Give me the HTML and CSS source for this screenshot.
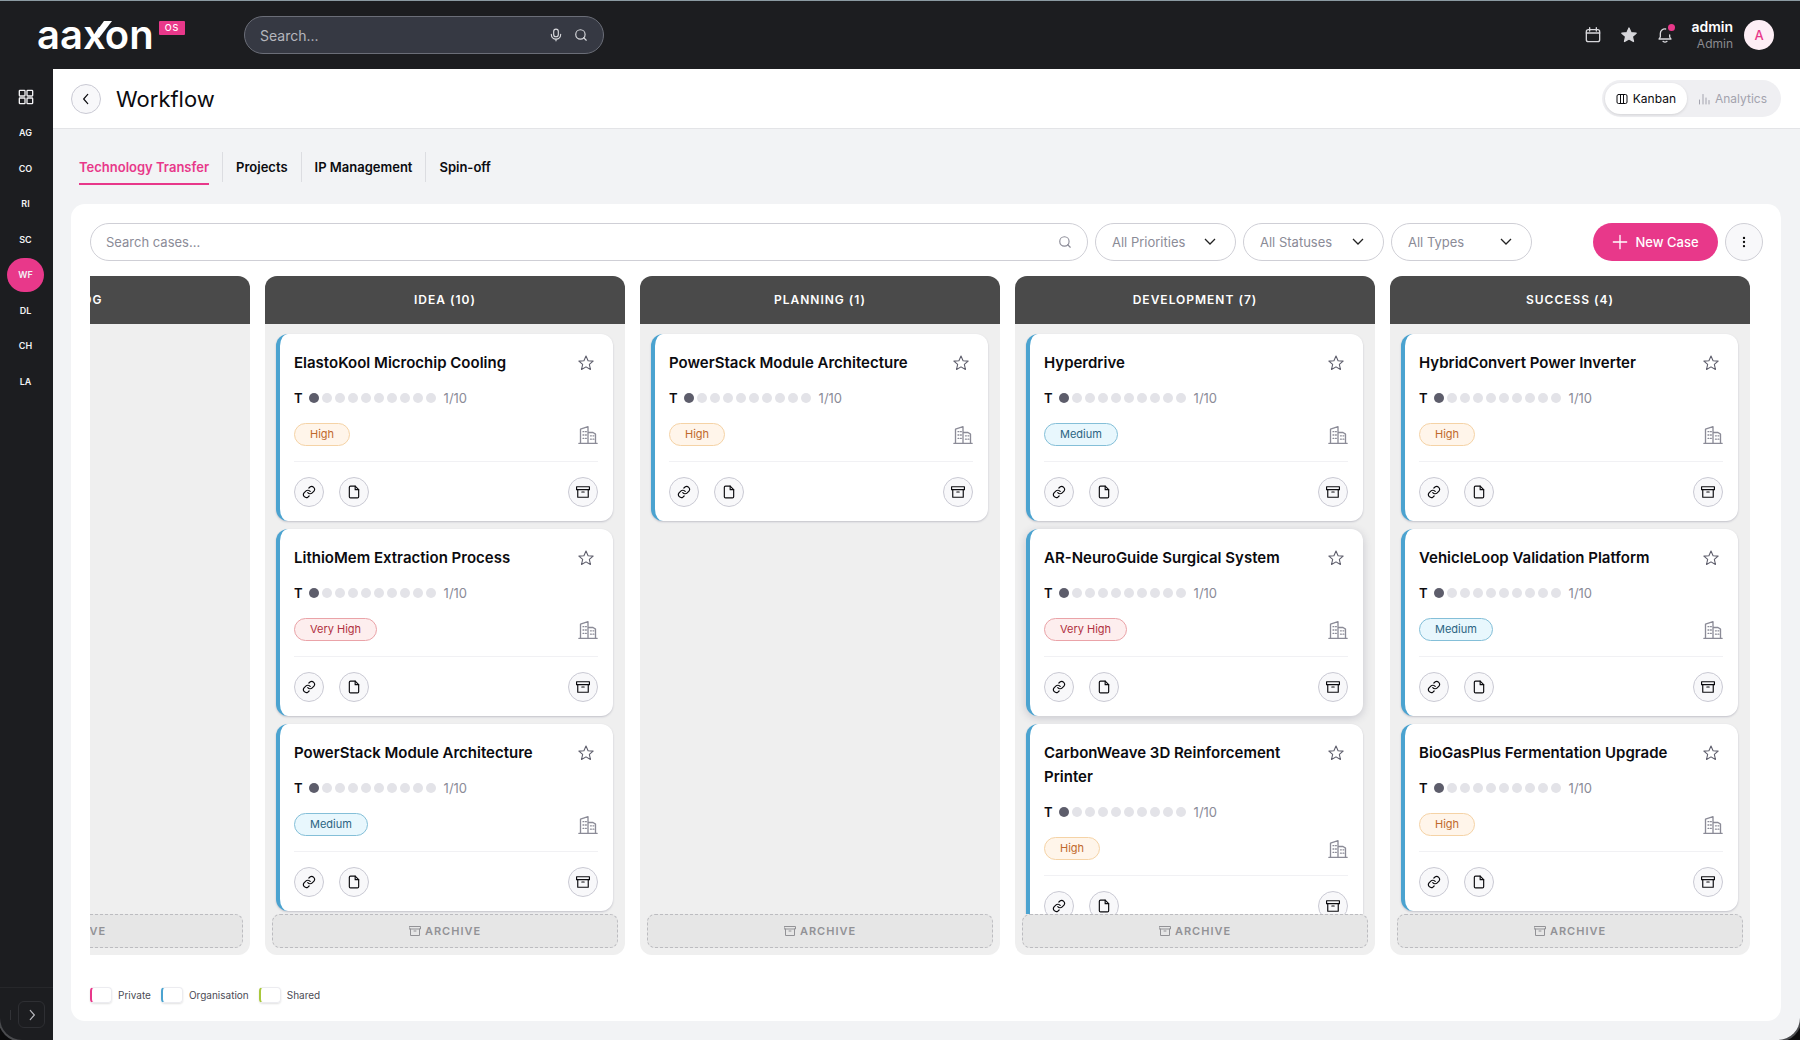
FILE: index.html
```html
<!DOCTYPE html>
<html lang="en">
<head>
<meta charset="utf-8">
<title>Workflow</title>
<link rel="stylesheet" href="styles.css">
</head>
<body>
<svg class="sprite" aria-hidden="true">
  <symbol id="i-search" viewBox="0 0 24 24"><circle cx="11" cy="11" r="8"/><path d="m21 21-4.3-4.3"/></symbol>
  <symbol id="i-mic" viewBox="0 0 24 24"><rect x="8" y="2" width="8" height="13" rx="4"/><path d="M4 11a8 8 0 0 0 16 0M12 19v3"/></symbol>
  <symbol id="i-cal" viewBox="0 0 24 24"><rect x="2" y="4" width="20" height="18" rx="3"/><path d="M2 9h20M7 1v5M17 1v5"/></symbol>
  <symbol id="i-star" viewBox="0 0 24 24"><path d="m12 1.500 3.100 7 7.600.7-5.700 5 1.700 7.500L12 17.800l-6.700 3.900 1.700-7.500-5.700-5 7.600-.7z"/></symbol>
  <symbol id="i-bell" viewBox="0 0 24 24"><path d="M13 3a7 7 0 0 0-8 7v5l-2 3h18l-2-3v-3M9 21.500c2 1.500 4 1.500 6 0"/></symbol>
  <symbol id="i-grid" viewBox="0 0 24 24"><rect x="2" y="2" width="8.500" height="8.500" rx="1"/><rect x="13.500" y="2" width="8.500" height="8.500" rx="1"/><rect x="2" y="13.500" width="8.500" height="8.500" rx="1"/><rect x="13.500" y="13.500" width="8.500" height="8.500" rx="1"/></symbol>
  <symbol id="i-left" viewBox="0 0 24 24"><path d="m15 4-7 8 7 8"/></symbol>
  <symbol id="i-right" viewBox="0 0 24 24"><path d="m9 4 7 8-7 8"/></symbol>
  <symbol id="i-board" viewBox="0 0 24 24"><rect x="2" y="3" width="20" height="18" rx="3"/><path d="M9 3v18M15 3v18"/></symbol>
  <symbol id="i-bars" viewBox="0 0 24 24"><path d="M3 14v8M10 3v19M16 10v12M22 15v7"/></symbol>
  <symbol id="i-plus" viewBox="0 0 24 24"><path d="M12 2v20M2 12h20"/></symbol>
  <symbol id="i-dots" viewBox="0 0 24 24"><circle cx="12" cy="5" r="1"/><circle cx="12" cy="12" r="1"/><circle cx="12" cy="19" r="1"/></symbol>
  <symbol id="i-link" viewBox="0 0 24 24"><path d="M10 13a5 5 0 0 0 7.500.5l3-3a5 5 0 0 0-7-7l-1.700 1.700"/><path d="M14 11a5 5 0 0 0-7.500-.5l-3 3a5 5 0 0 0 7 7l1.700-1.700"/></symbol>
  <symbol id="i-file" viewBox="0 0 24 24"><path d="M14 2H6a2 2 0 0 0-2 2v16a2 2 0 0 0 2 2h12a2 2 0 0 0 2-2V8z"/><path d="M14 2v6h6"/></symbol>
  <symbol id="i-box" viewBox="0 0 24 24"><rect x="1" y="3" width="22" height="5"/><path d="M3 8v13h18V8M10 12h4"/></symbol>
  <symbol id="i-org" viewBox="0 0 24 24"><path d="M1 22h22M3 22V5l9-3v20M12 9h6l3 2v11M6 8h1M6 12h1M6 16h1M9 8h1M9 12h1M9 16h1M15 13h1M15 17h1M18 13h1M18 17h1"/></symbol>
</svg>

<div class="app">
  <header class="topbar">
    <a class="logo" href="#">
      <span class="logo-word">aaxon<svg class="logo-slash" viewBox="0 0 19 17"><path d="M0 15 11 0h8L6 17z"/></svg></span>
      <span class="logo-tag">OS</span>
    </a>
    <label class="global-search">
      <input type="search" placeholder="Search..." aria-label="Search">
      <svg class="ic"><use href="#i-mic"/></svg>
      <svg class="ic"><use href="#i-search"/></svg>
    </label>
    <div class="top-actions">
      <div class="top-icons">
        <button aria-label="Calendar"><svg class="ic16"><use href="#i-cal"/></svg></button>
        <button class="solid" aria-label="Favourites"><svg class="ic16"><use href="#i-star"/></svg></button>
        <button class="bell" aria-label="Notifications"><svg class="ic16"><use href="#i-bell"/></svg></button>
      </div>
      <div class="user"><div class="user-text"><strong>admin</strong><span>Admin</span></div><span class="avatar">A</span></div>
    </div>
  </header>

  <div class="body">
    <aside class="sidebar">
      <nav class="side-nav">
        <a href="#" aria-label="Dashboard"><svg class="ic16"><use href="#i-grid"/></svg></a>
        <a href="#">AG</a><a href="#">CO</a><a href="#">RI</a><a href="#">SC</a>
        <a href="#" class="active">WF</a><a href="#">DL</a><a href="#">CH</a><a href="#">LA</a>
      </nav>
      <div class="side-foot"><button aria-label="Expand"><svg class="ic"><use href="#i-right"/></svg></button></div>
    </aside>

    <main class="main">
      <div class="page-head">
        <button class="round" aria-label="Back"><svg class="ic"><use href="#i-left"/></svg></button>
        <h1>Workflow</h1>
        <div class="toggle">
          <button class="on"><svg class="ic12"><use href="#i-board"/></svg>Kanban</button>
          <button><svg class="ic12"><use href="#i-bars"/></svg>Analytics</button>
        </div>
      </div>

      <nav class="tabs">
        <a href="#" class="active">Technology Transfer</a><a href="#">Projects</a><a href="#">IP Management</a><a href="#">Spin-off</a>
      </nav>

      <section class="panel">
        <div class="toolbar">
          <label class="case-search"><input type="search" placeholder="Search cases..." aria-label="Search cases"><svg class="ic"><use href="#i-search"/></svg></label>
          <select aria-label="Priority"><option>All Priorities</option></select>
          <select aria-label="Status"><option>All Statuses</option></select>
          <select aria-label="Type"><option>All Types</option></select>
          <button class="new-case"><svg class="ic16"><use href="#i-plus"/></svg>New Case</button>
          <button class="more" aria-label="More"><svg class="ic"><use href="#i-dots"/></svg></button>
        </div>
        <div class="board" id="board"></div>
        <div class="legend">
          <span><i class="swatch private"></i>Private</span>
          <span><i class="swatch organisation"></i>Organisation</span>
          <span><i class="swatch shared"></i>Shared</span>
        </div>
      </section>
    </main>
  </div>
</div>
<script src="board.js"></script>
</body>
</html>
```
FILE: styles.css
```css
* { box-sizing: border-box; }
body { margin: 0; background: #0b0b0c; font-family: Inter, "Noto Sans", sans-serif; color: #0b0b0f; font-size: 14px; }
button, input, select { font: inherit; color: inherit; margin: 0; }
button { cursor: pointer; padding: 0; border: 0; background: none; }
a { color: inherit; text-decoration: none; }
svg { fill: none; stroke: currentColor; stroke-width: 2; stroke-linecap: round; stroke-linejoin: round; flex: none; display: block; }
.sprite { display: none; }
.ic { width: 14px; height: 14px; }
.ic12 { width: 12px; height: 12px; }
.ic16 { width: 16px; height: 16px; }

.app { min-height: 100vh; display: flex; flex-direction: column; background: #1c1d20; border-top: 1px solid #8b9aa2; border-radius: 0 0 22px 22px; box-shadow: 0 0 0 2px #4a4b4e; overflow: hidden; }
.topbar { height: 68px; display: flex; align-items: center; padding: 0 26px 0 37px; color: #fff; }
.logo { width: 207px; display: flex; align-items: flex-start; gap: 5px; }
.logo-word { position: relative; font-size: 40px; line-height: 44px; font-weight: 600; }
.logo-slash { position: absolute; left: 56px; top: 8px; width: 19px; height: 17px; fill: currentColor; stroke: none; }
.logo-tag { margin-top: 8px; padding: 0 6px; border-radius: 1px; background: #e8388a; font-size: 9px; line-height: 14px; font-weight: 500; letter-spacing: 1px; }
.global-search { width: 360px; height: 38px; display: flex; align-items: center; gap: 11px; padding: 0 15px; border: 1px solid #6b6e78; border-radius: 19px; background: #363943; color: #d8d9dd; }
.global-search input, .case-search input { flex: 1; min-width: 0; border: 0; outline: 0; padding: 0; background: none; }
.global-search input::placeholder { color: #b5b6bd; }
.top-actions { margin-left: auto; display: flex; align-items: center; gap: 18px; color: #d6d6da; }
.top-icons { display: flex; gap: 20px; }
.solid svg { fill: currentColor; }
.bell { position: relative; }
.bell::after { content: ""; position: absolute; right: -2px; top: -3px; width: 7px; height: 7px; border-radius: 50%; background: #e8388a; }
.user { display: flex; align-items: center; gap: 11px; }
.user-text { display: flex; flex-direction: column; align-items: flex-end; }
.user-text strong { font-size: 14px; line-height: 18px; font-weight: 600; color: #fff; }
.user-text span { font-size: 12px; line-height: 16px; color: #8b8b90; }
.avatar { width: 30px; height: 30px; border-radius: 50%; background: #fdeef5; color: #e8388a; font-size: 13px; line-height: 30px; text-align: center; font-weight: 500; }

.body { flex: 1; display: flex; min-height: 0; }
.sidebar { width: 53px; flex: none; display: flex; flex-direction: column; color: #f2f2f4; }
.side-nav { height: 329px; padding: 11px 9px 0 7px; display: flex; flex-direction: column; justify-content: space-between; }
.side-nav a { height: 34px; display: flex; align-items: center; justify-content: center; border-radius: 17px; font-size: 9px; font-weight: 600; }
.side-nav .active { background: #e8388a; }
.side-foot { margin-top: auto; height: 53px; padding: 13px 8px 0 10px; border-top: 1px solid #26272a; display: flex; align-items: flex-start; justify-content: space-between; }
.side-foot::before { content: ""; width: 1px; height: 10px; margin-top: 9px; background: #323337; }
.side-foot button { width: 27px; height: 27px; border: 1px solid #2e2f33; border-radius: 6px; display: grid; place-items: center; color: #b9b9be; }

.main { flex: 1; min-width: 0; background: #f2f3f5; display: flex; flex-direction: column; }
.page-head { height: 60px; flex: none; display: flex; align-items: center; gap: 15px; padding: 0 19px 0 18px; background: #fff; border-bottom: 1px solid #e3e4e7; }
.round { width: 30px; height: 30px; flex: none; border: 1px solid #cacad4; border-radius: 50%; background: #f8f8fa; display: grid; place-items: center; }
h1 { margin: 0; font-size: 22px; line-height: 30px; font-weight: 400; }
.toggle { margin-left: auto; display: flex; padding: 3px; border-radius: 19px; background: #efeff2; }
.toggle button { height: 31px; padding: 0 11px; display: flex; align-items: center; gap: 5px; border-radius: 16px; font-size: 12px; color: #a3a3ae; }
.toggle .on { background: #fff; color: #0b0b0f; box-shadow: 0 1px 3px rgba(0, 0, 0, .12); }

.tabs { display: flex; padding: 23px 26px 0; margin-bottom: 19px; font-weight: 600; font-size: 13px; line-height: 30px; }
.tabs a + a { margin-left: 13px; padding-left: 13px; border-left: 1px solid #dcdde1; height: 30px; }
.tabs .active { padding-bottom: 1px; color: #e8388a; border-bottom: 2px solid #e8388a; }

.panel { flex: 1; margin: 0 19px 19px 18px; padding: 19px 18px 14px 19px; border-radius: 14px; background: #fff; display: flex; flex-direction: column; }
.toolbar { display: flex; gap: 7px; margin-bottom: 15px; color: #8b8b97; font-size: 13px; }
.case-search { flex: 1; height: 38px; display: flex; align-items: center; padding: 0 15px; border: 1px solid #cfcfd6; border-radius: 19px; }
.toolbar input::placeholder { color: #8b8b97; }
.toolbar select { width: 141px; height: 38px; padding: 0 16px; border: 1px solid #cfcfd6; border-radius: 19px; appearance: none;
  background: #fff url("data:image/svg+xml,%3Csvg xmlns='http://www.w3.org/2000/svg' width='12' height='8' fill='none' stroke='%23222' stroke-width='1.300'%3E%3Cpath d='M1 1l5 5 5-5'/%3E%3C/svg%3E") no-repeat right 19px center; }
.new-case { width: 125px; height: 38px; margin-left: 54px; display: flex; align-items: center; justify-content: center; gap: 7px; border-radius: 19px; background: #e8388a; color: #fff; font-weight: 500; }
.more { width: 38px; height: 38px; border: 1px solid #cfcfd6; border-radius: 50%; background: #f8f8fa; display: grid; place-items: center; color: #111; }
.more svg { fill: currentColor; }

.board { height: 679px; display: flex; justify-content: flex-end; gap: 15px; padding-right: 13px; overflow: hidden; }
.column { width: 360px; flex: none; display: flex; flex-direction: column; border-radius: 12px; background: #efefef; overflow: hidden; }
.column h2 { margin: 0; height: 48px; flex: none; background: #4a4a4a; color: #fff; font-size: 12px; line-height: 48px; font-weight: 600; letter-spacing: 1px; text-align: center; text-transform: uppercase; }
.cards { flex: 1; min-height: 0; overflow: hidden; padding: 10px 12px 0 11px; display: flex; flex-direction: column; gap: 8px; }
.archive { height: 34px; flex: none; margin: 0 7px 7px; border: 1px dashed #bcbcc0; border-radius: 8px; background: #e6e6e6; color: #929296; display: flex; align-items: center; justify-content: center; gap: 4px; font-size: 11px; font-weight: 600; letter-spacing: 1px; }

.card { flex: none; padding: 17px 15px 14px 14px; border-left: 4px solid #4ba3d0; border-radius: 12px; background: #fff; box-shadow: 0 1px 2px rgba(60, 60, 90, .25); }
.card.raised { box-shadow: 0 2px 8px rgba(60, 60, 90, .22); }
.card-head { display: flex; align-items: flex-start; gap: 16px; }
.card h3 { margin: 0; flex: 1; font-size: 15px; line-height: 24px; font-weight: 600; }
.card-head button { width: 24px; height: 24px; display: grid; place-items: center; color: #5d5d6b; }
.card-head svg { stroke-width: 1.600; }
.level { display: flex; align-items: center; height: 20px; margin-top: 13px; gap: 6px; color: #8b8b97; font-size: 13px; }
.level b { color: #0b0b0f; font-weight: 600; }
.dots { display: flex; gap: 3px; margin-right: 2px; }
.dots i { width: 10px; height: 10px; border-radius: 50%; background: #e3e3e8; }
.dots i.full { background: #5d5d6b; }
.tags { display: flex; justify-content: space-between; align-items: center; height: 23px; margin-top: 15px; color: #8b8b97; }
.org { width: 20px; height: 20px; stroke-width: 1.600; }
.badge { height: 23px; padding: 0 15px; border: 1px solid; border-radius: 12px; font-size: 11px; line-height: 21px; }
.badge.high { color: #c0692c; background: #fff5ea; border-color: #f5d3a6; }
.badge.very-high { color: #b03040; background: #fdeeee; border-color: #eaa3a8; }
.badge.medium { color: #2b6482; background: #e8f7fd; border-color: #84bfd8; }
.card-foot { margin-top: 15px; padding-top: 15px; border-top: 1px solid #f1f1f4; display: flex; gap: 15px; }
.card-foot .round:last-child { margin-left: auto; }

.legend { margin-top: 30px; display: flex; gap: 10px; font-size: 10px; line-height: 20px; color: #4b4b55; }
.legend span { display: flex; align-items: center; gap: 6px; }
.swatch { width: 22px; height: 16px; border: 1px solid #ececf0; border-left-width: 2px; border-radius: 4px; box-shadow: 0 1px 2px rgba(0, 0, 0, .12); }
.private { border-left-color: #e8388a; }
.organisation { border-left-color: #4ba3d0; }
.shared { border-left-color: #a9c83c; }
```
FILE: board.js
```js
const columns = [
  { name: "Backlog", count: 0, cards: [] },
  { name: "Idea", count: 10, cards: [["ElastoKool Microchip Cooling", "High"], ["LithioMem Extraction Process", "Very High"], ["PowerStack Module Architecture", "Medium"]] },
  { name: "Planning", count: 1, cards: [["PowerStack Module Architecture", "High"]] },
  { name: "Development", count: 7, cards: [["Hyperdrive", "Medium"], ["AR-NeuroGuide Surgical System", "Very High", "raised"], ["CarbonWeave 3D Reinforcement Printer", "High"]] },
  { name: "Success", count: 4, cards: [["HybridConvert Power Inverter", "High"], ["VehicleLoop Validation Platform", "Medium"], ["BioGasPlus Fermentation Upgrade", "High"]] }
];
const icon = (id, cls) => `<svg class="${cls}"><use href="#i-${id}"/></svg>`;
const dots = '<i class="full"></i>' + "<i></i>".repeat(9);
const card = ([title, priority, state = ""]) => `
  <article class="card ${state}">
    <div class="card-head"><h3>${title}</h3><button aria-label="Favourite">${icon("star", "ic16")}</button></div>
    <div class="level"><b>T</b><span class="dots">${dots}</span><span>1/10</span></div>
    <div class="tags"><span class="badge ${priority.toLowerCase().replace(" ", "-")}">${priority}</span>${icon("org", "org")}</div>
    <div class="card-foot">
      <button class="round" aria-label="Links">${icon("link", "ic")}</button>
      <button class="round" aria-label="Files">${icon("file", "ic")}</button>
      <button class="round" aria-label="Archive">${icon("box", "ic")}</button>
    </div>
  </article>`;
document.getElementById("board").innerHTML = columns.map(c => `
  <section class="column">
    <h2>${c.name}${c.count ? ` (${c.count})` : ""}</h2>
    <div class="cards">${c.cards.map(card).join("")}</div>
    <div class="archive">${icon("box", "ic12")}ARCHIVE</div>
  </section>`).join("");
```
